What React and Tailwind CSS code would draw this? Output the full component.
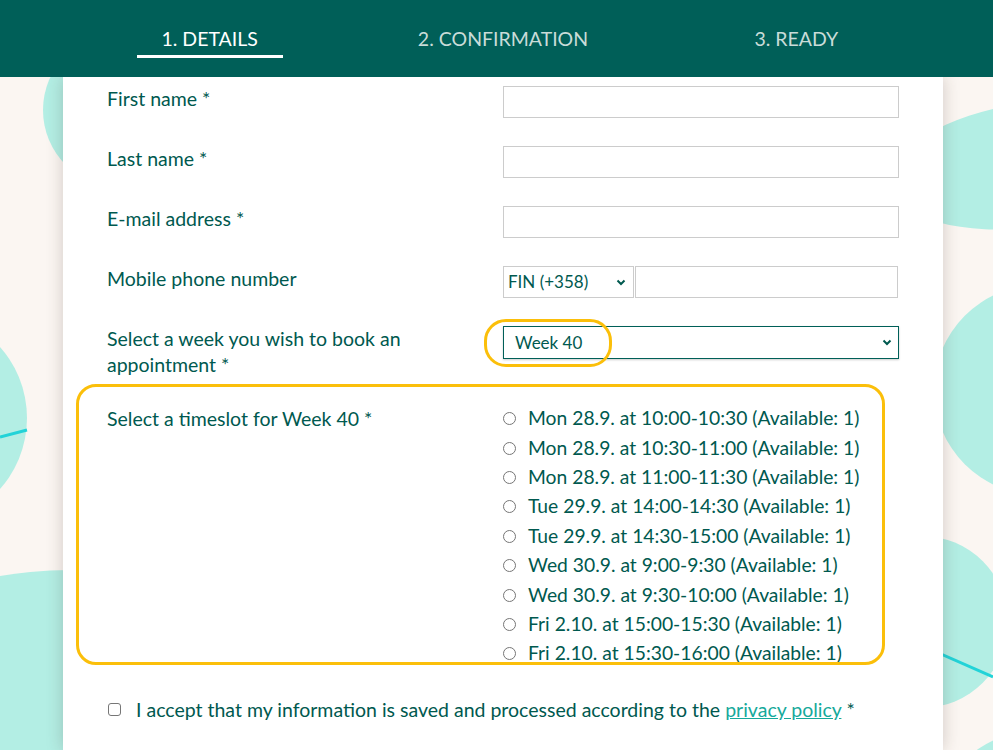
import React from 'react';

const slots = [
  'Mon 28.9. at 10:00-10:30 (Available: 1)',
  'Mon 28.9. at 10:30-11:00 (Available: 1)',
  'Mon 28.9. at 11:00-11:30 (Available: 1)',
  'Tue 29.9. at 14:00-14:30 (Available: 1)',
  'Tue 29.9. at 14:30-15:00 (Available: 1)',
  'Wed 30.9. at 9:00-9:30 (Available: 1)',
  'Wed 30.9. at 9:30-10:00 (Available: 1)',
  'Fri 2.10. at 15:00-15:30 (Available: 1)',
  'Fri 2.10. at 15:30-16:00 (Available: 1)',
];

function Chevron() {
  return (
    <svg width="10" height="7" viewBox="0 0 10 7" className="shrink-0">
      <path d="M1.5 1.5 L5 5 L8.5 1.5" fill="none" stroke="#00594f" strokeWidth="2" />
    </svg>
  );
}

function Background() {
  return (
    <svg className="absolute inset-0" width="993" height="750" viewBox="0 0 993 750">
      <rect width="993" height="750" fill="#fbf6f2" />
      <g fill="#b3eee4">
        <circle cx="121" cy="110" r="78" />
        <circle cx="-80" cy="418" r="107" />
        <circle cx="70" cy="975" r="405" />
        <ellipse cx="1030" cy="165" rx="140" ry="62" transform="rotate(-8 1030 165)" />
        <circle cx="1039" cy="390" r="105" />
        <circle cx="922" cy="622" r="86" />
        <circle cx="1040" cy="840" r="110" />
      </g>
      <line x1="0" y1="437" x2="27" y2="430" stroke="#22d3d8" strokeWidth="3" />
      <line x1="900" y1="636" x2="993" y2="677" stroke="#22d3d8" strokeWidth="3" />
    </svg>
  );
}

function Row({ label, children }) {
  return (
    <div className="grid grid-cols-2 mb-[28px]">
      <div className="leading-[26px] pr-8">{label}</div>
      <div>{children}</div>
    </div>
  );
}

function TextInput() {
  return <div className="h-[32px] border border-[#cccccc] bg-white" />;
}

export default function App() {
  return (
    <div
      className="relative w-[993px] h-[750px] overflow-hidden text-[#00594f]"
      style={{ fontFamily: 'Lato, "Noto Sans", sans-serif' }}
    >
      <Background />

      <div className="relative z-10 h-[77px] bg-[#005f58]">
        <div className="ml-[63px] w-[880px] grid grid-cols-3 h-full text-[19.5px] uppercase">
          <div className="flex justify-center">
            <div className="mt-[27px] h-[31px] w-[146px] border-b-[3px] border-white text-white text-center leading-[24px]">
              1. Details
            </div>
          </div>
          <div className="flex justify-center">
            <div className="mt-[27px] text-[#c9dcd8] leading-[24px]">2. Confirmation</div>
          </div>
          <div className="flex justify-center">
            <div className="mt-[27px] text-[#c9dcd8] leading-[24px]">3. Ready</div>
          </div>
        </div>
      </div>

      <div className="relative ml-[63px] w-[880px] h-[673px] bg-white shadow-[0_0_16px_rgba(60,40,30,0.22)] px-[44px] pt-[9px] text-[19.5px]">
        <Row label="First name *">
          <TextInput />
        </Row>
        <Row label="Last name *">
          <TextInput />
        </Row>
        <Row label="E-mail address *">
          <TextInput />
        </Row>
        <Row label="Mobile phone number">
          <div className="flex h-[32px]">
            <div className="w-[131px] border border-[#cccccc] flex items-center justify-between pl-[4px] pr-[7px] text-[17px]">
              <span>FIN (+358)</span>
              <Chevron />
            </div>
            <div className="flex-1 border border-[#cccccc] ml-[1px] mr-[1px]" />
          </div>
        </Row>
        <Row label="Select a week you wish to book an appointment *">
          <div className="h-[33px] border border-[#005f58] flex items-center justify-between pl-[11px] pr-[6px] text-[17px] shadow-[0_1px_2px_rgba(0,0,0,0.2)]">
            <span>Week 40</span>
            <Chevron />
          </div>
        </Row>

        <div className="grid grid-cols-2">
          <div className="leading-[26px]">Select a timeslot for Week 40 *</div>
          <div className="text-[19.3px] -mt-[2px]">
            {slots.map((s) => (
              <div key={s} className="flex items-center h-[29.4px]">
                <span className="w-[13px] h-[13px] rounded-full border border-[#767676] bg-white shrink-0" />
                <span className="ml-[12px] whitespace-nowrap">{s}</span>
              </div>
            ))}
          </div>
        </div>

        <div className="flex items-center mt-[28px] leading-[26px]">
          <span className="ml-[1px] w-[13px] h-[13px] rounded-[3px] border border-[#767676] bg-white shrink-0" />
          <span className="ml-[15px] whitespace-nowrap">
            I accept that my information is saved and processed according to the{' '}
            <span className="text-[#15a99b] underline">privacy policy</span> *
          </span>
        </div>
      </div>

      <div className="absolute left-[484px] top-[319px] w-[128px] h-[48px] border-[3px] border-[#fbbf0a] rounded-[22px] z-20" />
      <div className="absolute left-[76px] top-[384px] w-[809px] h-[281px] border-[3px] border-[#fbbf0a] rounded-[20px] z-20" />
    </div>
  );
}
